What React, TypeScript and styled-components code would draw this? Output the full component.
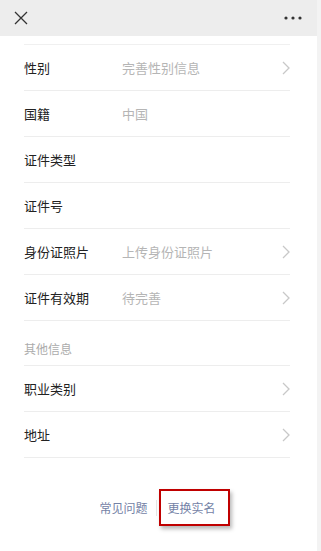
import React from "react";
import styled, { createGlobalStyle } from "styled-components";

const Global = createGlobalStyle`
  html, body { margin: 0; padding: 0; background: #fff; }
  body { font-family: "Noto Sans CJK SC", "Noto Sans", sans-serif; -webkit-font-smoothing: antialiased; }
`;

const Page = styled.div`
  display: flex;
  width: 321px;
  height: 551px;
  overflow: hidden;
`;

const Main = styled.div`
  flex: 1;
  display: flex;
  flex-direction: column;
  background: #fff;
`;

const ScrollTrack = styled.div`
  width: 4px;
  background: #f3f3f3;
`;

const Header = styled.div`
  height: 36px;
  background: #ededed;
  display: flex;
  align-items: center;
  justify-content: space-between;
  padding: 0 15px 0 14px;
`;

const IconButton = styled.div`
  display: flex;
  align-items: center;
  justify-content: center;
`;

const List = styled.div`
  display: flex;
  flex-direction: column;
  margin: 8px 27px 0 24px;
  border-top: 1px solid #f0f0f0;
`;

const Row = styled.div`
  height: 45px;
  display: flex;
  align-items: center;
  border-bottom: 1px solid #ededed;
`;

const SectionTitle = styled.div`
  height: 45px;
  display: flex;
  align-items: flex-end;
  padding-bottom: 8px;
  box-sizing: border-box;
  border-bottom: 1px solid #ededed;
  font-size: 12px;
  color: #ababab;
`;

const Label = styled.div`
  width: 98px;
  font-size: 13px;
  color: #222;
  flex-shrink: 0;
`;

const Value = styled.div`
  flex: 1;
  font-size: 13px;
  color: #b5b5b5;
`;

const Chevron = styled.svg`
  width: 8px;
  height: 14px;
  margin-right: 0px;
`;

const Footer = styled.div`
  display: flex;
  justify-content: center;
  align-items: center;
  margin-top: 41px;
  padding-right: 2px;
`;

const Link = styled.span`
  position: relative;
  font-size: 12px;
  line-height: 17px;
  color: #7482a6;
`;

const Sep = styled.div`
  width: 1px;
  height: 16px;
  background: #e6e6e6;
  margin: 0 11px 0 8px;
`;

const Highlight = styled.div`
  position: absolute;
  left: -9px;
  right: -14px;
  top: -10px;
  bottom: -10px;
  border: 2px solid #c00000;
  box-shadow: 2px 3px 4px rgba(0, 0, 0, 0.28);
  pointer-events: none;
`;

const ChevronIcon = () => (
  <Chevron viewBox="0 0 8 14">
    <path d="M1 1l6 6-6 6" fill="none" stroke="#c8c8c8" strokeWidth="1.3" />
  </Chevron>
);

type Item = { label: string; value?: string; arrow?: boolean };

const basic: Item[] = [
  { label: "性别", value: "完善性别信息", arrow: true },
  { label: "国籍", value: "中国" },
  { label: "证件类型" },
  { label: "证件号" },
  { label: "身份证照片", value: "上传身份证照片", arrow: true },
  { label: "证件有效期", value: "待完善", arrow: true },
];

const other: Item[] = [
  { label: "职业类别", arrow: true },
  { label: "地址", arrow: true },
];

const renderRow = (it: Item) => (
  <Row key={it.label}>
    <Label>{it.label}</Label>
    <Value>{it.value}</Value>
    {it.arrow && <ChevronIcon />}
  </Row>
);

export default function App() {
  return (
    <>
      <Global />
      <Page>
        <Main>
          <Header>
            <IconButton>
              <svg width="14" height="14" viewBox="0 0 14 14">
                <path d="M1 1l12 12M13 1L1 13" stroke="#333" strokeWidth="1.3" fill="none" />
              </svg>
            </IconButton>
            <IconButton>
              <svg width="18" height="4" viewBox="0 0 18 4">
                <circle cx="2" cy="2" r="1.6" fill="#333" />
                <circle cx="9" cy="2" r="1.6" fill="#333" />
                <circle cx="16" cy="2" r="1.6" fill="#333" />
              </svg>
            </IconButton>
          </Header>
          <List>
            {basic.map(renderRow)}
            <SectionTitle>其他信息</SectionTitle>
            {other.map(renderRow)}
          </List>
          <Footer>
            <Link>常见问题</Link>
            <Sep />
            <Link>
              更换实名
              <Highlight />
            </Link>
          </Footer>
        </Main>
        <ScrollTrack />
      </Page>
    </>
  );
}
